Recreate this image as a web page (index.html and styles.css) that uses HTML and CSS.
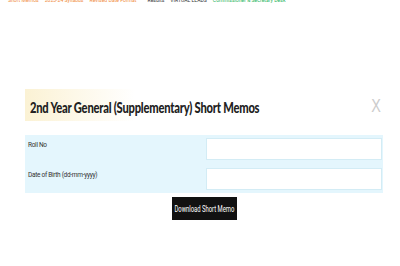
FILE: index.html
```html
<!DOCTYPE html>
<html>
<head>
<meta charset="utf-8">
<link rel="stylesheet" href="styles.css">
</head>
<body>
<nav class="nav">
  <a class="orange">Short Memos</a>
  <a class="orange">2023-24 Syllabus</a>
  <a class="orange">Revised Date Format</a>
  <a class="dark gap">Results</a>
  <a class="dark">VIRTUAL LEADS</a>
  <a class="green">Commissioner &amp; Secretary Desk</a>
</nav>
<main class="modal">
  <div class="head">
    <h1 class="title">2nd Year General (Supplementary) Short Memos</h1>
    <span class="close">X</span>
  </div>
  <div class="form">
    <div class="row">
      <label class="label">Roll No</label>
      <input class="input" type="text">
    </div>
    <div class="row">
      <label class="label">Date of Birth (dd-mm-yyyy)</label>
      <input class="input" type="text">
    </div>
  </div>
  <div class="actions">
    <button class="btn"><span class="btn-text">Download Short Memo</span></button>
  </div>
</main>
</body>
</html>
```
FILE: styles.css
```css
html, body { margin: 0; padding: 0; background: #fff; }
body { font-family: "Roboto", "Liberation Sans", sans-serif; width: 400px; height: 266px; overflow: hidden; }
.nav { display: flex; gap: 6px; padding-left: 8px; margin-top: -4px; font-size: 5.1px; line-height: 8px; font-family: "Roboto", sans-serif; }
.nav a { white-space: nowrap; }
.nav .gap { margin-left: 5px; }
.orange { color: #f08c3c; }
.dark { color: #333; }
.green { color: #27b35a; }
.modal { margin: 85px 17px 0 25px; }
.head { display: flex; justify-content: space-between; align-items: center; box-sizing: border-box; height: 32px; padding: 3px 0 0 5px; background: linear-gradient(to right, #fbf2d4 0px, #fdf8e8 50px, rgba(255,255,255,0) 110px); }
.title { margin: 0; font-family: "Lato", sans-serif; font-weight: 900; font-size: 15.5px; color: #222; letter-spacing: -0.3px; transform: scaleX(0.72); transform-origin: left center; white-space: nowrap; }
.close { font-family: "Liberation Sans", sans-serif; font-size: 18px; color: #ccc; font-weight: 300; margin-right: 1px; transform: scaleX(0.8); }
.form { margin-top: 14px; background: #e4f6fd; padding: 3px 1px 3px 3px; display: flex; flex-direction: column; gap: 8px; }
.row { display: flex; justify-content: space-between; align-items: flex-start; height: 22px; }
.label { font-size: 6.5px; color: #333; padding-top: 3px; letter-spacing: -0.3px; }
.input { width: 176px; height: 22px; box-sizing: border-box; border: 1px solid #d3ecf5; background: #fff; margin: 0; padding: 0; }
.actions { display: flex; justify-content: center; padding-top: 4px; }
.btn { background: #111; color: #fff; border: 0; font-family: "Roboto", sans-serif; font-size: 8.5px; height: 23px; width: 65px; padding: 0; display: flex; align-items: center; justify-content: center; overflow: hidden; }
.btn-text { display: inline-block; white-space: nowrap; transform: scaleX(0.69); }
```
